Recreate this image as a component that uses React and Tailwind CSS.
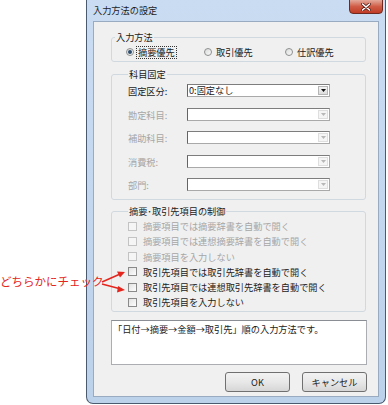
import React from 'react';

const disabledText = 'text-[#a6a6a6]';

function Radio({ label, checked, focused }) {
    return (
        <div className="flex items-center h-[12px]">
            <span className="relative w-[8px] h-[8px] rounded-full border border-[#8e8f8f] bg-gradient-to-br from-[#d9dadb] to-[#fbfbfb] flex items-center justify-center">
                {checked && <span className="w-[4px] h-[4px] rounded-full bg-[#2c4c6e]"></span>}
            </span>
            <span className={`ml-[3px] px-[1px] leading-[11px] ${focused ? 'outline outline-1 outline-dotted outline-[#333]' : ''}`}>
                {label}
            </span>
        </div>
    );
}

function ComboRow({ label, value, disabled, className }) {
    return (
        <div className={`flex items-center h-[13px] ${className}`}>
            <span className={`w-[59px] ${disabled ? disabledText : ''}`}>{label}</span>
            <div className="w-[143px] h-[13px] bg-white border border-[#a9a9a9] border-l-[#646464] border-t-[#7d7d7d] flex items-center">
                <span className="flex-1 pl-[1px] leading-[11px] whitespace-nowrap">{value}</span>
                <span className={`w-[10px] h-[9px] mr-[1px] flex items-center justify-center border ${disabled ? 'border-[#dedede] bg-[#f5f5f5]' : 'border-[#b5b5b5] bg-gradient-to-b from-[#f4f4f4] to-[#dcdcdc]'}`}>
                    <svg width="5" height="3" viewBox="0 0 5 3">
                        <path d="M0 0 H5 L2.5 3 Z" fill={disabled ? '#b8b8b8' : '#111'} />
                    </svg>
                </span>
            </div>
        </div>
    );
}

function Check({ label, disabled }) {
    return (
        <div className="flex items-center h-[12px]">
            <span className={`w-[9px] h-[9px] border ${disabled ? 'border-[#c3c3c3] bg-[#f5f5f5]' : 'border-[#8a8a8a] bg-gradient-to-br from-[#e2e2e2] to-[#fdfdfd]'}`}></span>
            <span className={`ml-[6px] whitespace-nowrap ${disabled ? disabledText : ''}`}>{label}</span>
        </div>
    );
}

function Group({ title, className, legendClass, children }) {
    return (
        <fieldset className={`w-[255px] border border-[#d0d9df] rounded-[3px] ${className}`}>
            <legend className={`px-[1px] leading-[12px] ${legendClass || ''}`}>{title}</legend>
            {children}
        </fieldset>
    );
}

export default function App() {
    return (
        <div className="relative flex w-[388px] h-[405px] bg-white overflow-hidden font-['Noto_Sans_CJK_JP','Noto_Sans',sans-serif] text-[9.2px] leading-[12px] text-[#1b1b1b]">
            {/* dialog window */}
            <div className="ml-[86px] w-[300px] h-[404px] flex flex-col rounded-b-[7px] border border-t-0 border-[#4a5b70] bg-gradient-to-b from-[#c9dcf2] via-[#c3d7ef] to-[#bcd1ea] px-[6px] pb-[6px]">
                <div className="h-[21px] flex items-start justify-between -mr-[4px]">
                    <span className="pt-[4px] text-[#1e1e1e]">入力方法の設定</span>
                    <div className="w-[34px] h-[15px] -mt-[1px] rounded-b-[4px] border border-[#6e2a20] bg-gradient-to-b from-[#e3a99b] via-[#cf5c46] to-[#c13b25] flex items-center justify-center">
                        <svg width="10" height="8" viewBox="0 0 10 8">
                            <path d="M1.5 1 L8.5 7 M8.5 1 L1.5 7" stroke="#5a1e16" strokeWidth="3" strokeLinecap="round" />
                            <path d="M1.5 1 L8.5 7 M8.5 1 L1.5 7" stroke="#fff" strokeWidth="1.6" strokeLinecap="round" />
                        </svg>
                    </div>
                </div>

                {/* client area */}
                <div className="flex-1 bg-[#f0f0f0] border border-[#98abc1] pl-[17px] flex flex-col">
                    <Group title="入力方法" className="mt-[9px] pb-[3px]" legendClass="ml-[3px]">
                        <div className="grid grid-cols-[78px_81px_auto] pl-[14px] pt-[3px]">
                            <Radio label="摘要優先" checked focused />
                            <Radio label="取引優先" />
                            <Radio label="仕訳優先" />
                        </div>
                    </Group>

                    <Group title="科目固定" className="mt-[6px] pb-[8px] pl-[16px]">
                        <ComboRow label="固定区分:" value="0:固定なし" className="mt-[4px]" />
                        <ComboRow label="勘定科目:" disabled className="mt-[11px]" />
                        <ComboRow label="補助科目:" disabled className="mt-[10px]" />
                        <ComboRow label="消費税:" disabled className="mt-[11px]" />
                        <ComboRow label="部門:" disabled className="mt-[10px]" />
                    </Group>

                    <Group title="摘要･取引先項目の制御" className="mt-[5px] pb-[3px] pl-[16px]">
                        <div className="flex flex-col gap-[3.3px] pt-[3px]">
                            <Check label="摘要項目では摘要辞書を自動で開く" disabled />
                            <Check label="摘要項目では連想摘要辞書を自動で開く" disabled />
                            <Check label="摘要項目を入力しない" disabled />
                            <Check label="取引先項目では取引先辞書を自動で開く" />
                            <Check label="取引先項目では連想取引先辞書を自動で開く" />
                            <Check label="取引先項目を入力しない" />
                        </div>
                    </Group>

                    <div className="mt-[8px] w-[256px] h-[45px] bg-white border border-[#abadb3] border-t-[#8a8d94] px-[1px] pt-[2px] whitespace-nowrap">
                        「日付→摘要→金額→取引先」順の入力方法です。
                    </div>

                    <div className="mt-[7px] w-[256px] flex justify-end gap-[12px]">
                        <button className="w-[65px] h-[20px] rounded-[3px] border border-[#707070] bg-gradient-to-b from-[#f2f2f2] via-[#e8e8e8] to-[#d6d6d6] text-[9.2px]">OK</button>
                        <button className="w-[65px] h-[20px] rounded-[3px] border border-[#707070] bg-gradient-to-b from-[#f2f2f2] via-[#e8e8e8] to-[#d6d6d6] text-[9.2px]">キャンセル</button>
                    </div>
                </div>
            </div>

            {/* annotation over the screenshot */}
            <span className="absolute left-0 top-[274px] text-[11.5px] leading-[15px] text-[#e3251d] whitespace-nowrap">どちらかにチェック</span>
            <svg className="absolute left-0 top-0 pointer-events-none" width="388" height="405">
                <path d="M102 282 L119 274.5" stroke="#e3251d" strokeWidth="1.5" />
                <path d="M125 272 L117 271.5 L120 277.5 Z" fill="#e3251d" />
                <path d="M102 284 L119 288.5" stroke="#e3251d" strokeWidth="1.5" />
                <path d="M125 290 L118 286 L117 292.5 Z" fill="#e3251d" />
            </svg>
        </div>
    );
}
